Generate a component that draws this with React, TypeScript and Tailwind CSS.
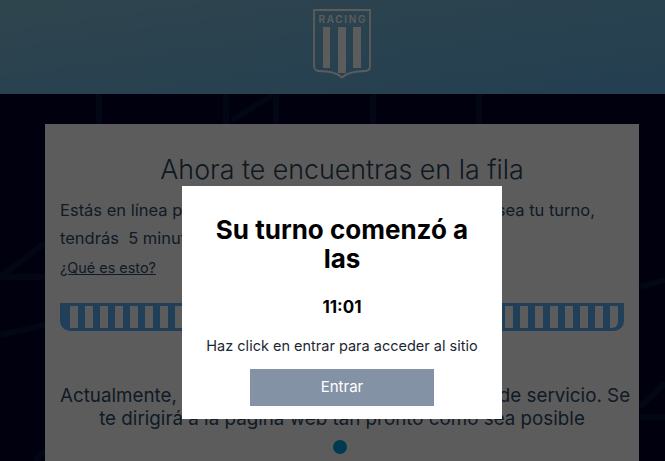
function Crest() {
  return (
    <svg width="58" height="70" viewBox="0 0 58 70" fill="none">
      <path
        d="M1 1H57V57C57 60 55 62 52 62C44 62 35 63 29 68.500C23 63 14 62 6 62C3 62 1 60 1 57Z"
        stroke="#ffffff"
        strokeWidth="1.800"
      />
      <text
        x="29"
        y="13.500"
        textAnchor="middle"
        fill="#ffffff"
        fontSize="10"
        fontWeight="600"
        textLength="47"
        fontFamily="Inter, sans-serif"
      >
        RACING
      </text>
      <path d="M10 18H17V59H10Z M25 18H33V64H25Z M40 18H48V59H40Z" fill="#ffffff" />
    </svg>
  );
}

function ProgressBar() {
  return (
    <div className="flex h-7 gap-[7px] rounded-b-[10px] bg-[#5cb0f4] py-[3px] pl-[10px]">
      {Array.from({ length: 37 }).map((_, i) => (
        <div key={i} className={`w-2 bg-white ${i === 36 ? "rounded-br-[6px]" : ""}`} />
      ))}
    </div>
  );
}

export default function App() {
  return (
    <div className="relative h-screen overflow-hidden bg-[#00002c] font-['Inter',sans-serif]">
      <svg
        className="absolute inset-0"
        width="665"
        height="461"
        fill="none"
        stroke="#4a90a0"
        strokeOpacity="0.12"
        strokeWidth="6"
      >
        <path d="M99 94V124M226 94V124M276 94V124M373 94V124M479 94V124M232 120L273 95" />
        <path d="M0 277H45M0 277L45 243M0 335L45 325M35 461L45 450" />
        <path d="M640 287L665 280M640 407L665 383M640 417H665" />
      </svg>

      <header className="relative flex h-[94px] justify-center bg-gradient-to-br from-[#84bfd8] to-[#62aee0] pl-[19px] pt-[9px]">
        <Crest />
      </header>

      <main className="relative mx-[45px] mt-[30px] h-[400px] w-[594px] bg-white px-[15px] pt-[29px] text-[#2f4c68]">
        <h1 className="text-center text-[26.800px] font-light leading-[32px] text-[#2a4560]">
          Ahora te encuentras en la fila
        </h1>
        <p className="mt-[11px] whitespace-nowrap text-[16.500px] leading-[28px]">
          Estás en línea para ingresar a esta página web. Cuando sea tu turno,
          <br />
          tendrás&nbsp; 5 minutos para ingresar.
        </p>
        <a className="mt-[6px] block text-[14.400px] leading-[20px] underline">¿Qué es esto?</a>
        <div className="mt-[25px]">
          <ProgressBar />
        </div>
        <p className="mt-[53px] whitespace-nowrap text-center text-[18.800px] leading-[23px]">
          Actualmente, experimentamos una alta demanda de servicio. Se
          <br />
          te dirigirá a la página web tan pronto como sea posible
        </p>
        <div className="ml-[273px] mt-[10px] size-[14px] rounded-full bg-[#00a0e0]" />
      </main>

      <div className="absolute inset-0 flex items-start justify-center bg-black/[.64] pl-[19px] pt-[186px]">
        <div className="flex h-[233px] w-[320px] flex-col items-center bg-white px-[30px] pt-[29px] text-black">
          <h2 className="text-center text-[26px] font-bold leading-[29px]">Su turno comenzó a las</h2>
          <p className="mt-[23px] text-[17px] font-bold leading-[22px]">11:01</p>
          <p className="mt-[18px] whitespace-nowrap text-[14.500px] leading-[20px] text-[#1c2733]">
            Haz click en entrar para acceder al sitio
          </p>
          <button className="mt-[13px] h-[37px] w-[184px] shrink-0 bg-[#8492a6] text-[15px] text-white">Entrar</button>
        </div>
      </div>
    </div>
  );
}
